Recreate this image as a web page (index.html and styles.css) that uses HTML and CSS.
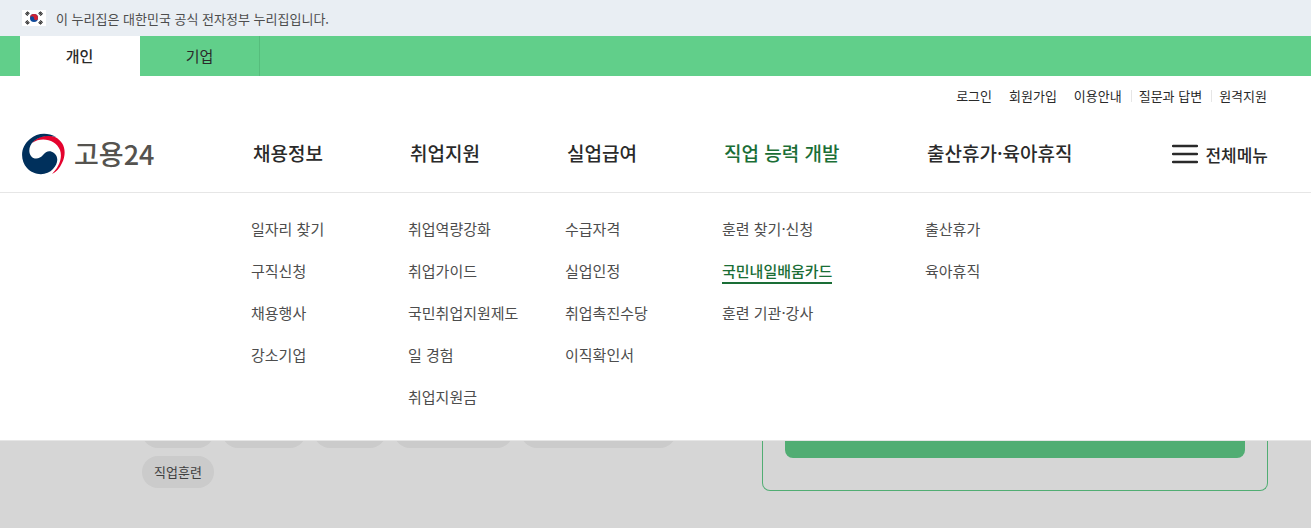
FILE: index.html
```html
<!DOCTYPE html>
<html lang="ko">
<head>
    <meta charset="utf-8">
    <meta name="viewport" content="width=device-width, initial-scale=1">
    <title>고용24</title>
    <link rel="stylesheet" href="styles.css">
</head>
<body>
    <div class="gov-banner">
        <svg class="flag" viewBox="0 0 24 16" width="24" height="16" aria-hidden="true">
            <rect width="24" height="16" fill="#fff"/>
            <circle cx="12" cy="8" r="4" fill="#0f4c9c"/>
            <path d="M8 8A4 4 0 0 1 16 8A2 2 0 0 1 12 8.500A2 2 0 0 0 8 8z" fill="#cf2233"/>
            <g stroke="#222" stroke-width="3.200" stroke-dasharray="1 0.300">
                <path d="M4.200 4.900L6.600 2.200"/>
                <path d="M17.400 2.200L19.800 4.900"/>
                <path d="M4.200 11.100L6.600 13.800"/>
                <path d="M17.400 13.800L19.800 11.100"/>
            </g>
        </svg>
        <span>이 누리집은 대한민국 공식 전자정부 누리집입니다.</span>
    </div>

    <nav class="site-tabs" aria-label="회원 구분">
        <a class="tab active" href="#">개인</a>
        <a class="tab" href="#">기업</a>
    </nav>

    <header class="header">
        <ul class="util">
            <li><a href="#">로그인</a></li>
            <li><a href="#">회원가입</a></li>
            <li><a href="#">이용안내</a></li>
            <li class="bar"><a href="#">질문과 답변</a></li>
            <li class="bar"><a href="#">원격지원</a></li>
        </ul>

        <div class="gnb">
            <a class="logo" href="#">
                <svg viewBox="0 0 44 42" width="44" height="42" aria-hidden="true">
                    <path d="M10 10C15 4 24 1 33 4C43 9 45 20 40 30C38 35 34 39 30 41C36 35 41 26 38 17C34 7 20 3 10 10z" fill="#e4032e"/>
                    <path d="M34 4C25 -1 15 0 8 6C-2 14 -2 27 5 35C12 43 25 43 31 36C36 31 37 24 32 20C28 17 24 18 21 22C18 26 12 27 9 23C6 19 7 12 12 8C18 3 26 2 34 4z" fill="#00305c"/>
                </svg>
                <span>고용24</span>
            </a>
            <ul class="menu">
                <li><a href="#">채용정보</a></li>
                <li><a href="#">취업지원</a></li>
                <li><a href="#">실업급여</a></li>
                <li><a class="active" href="#">직업 능력 개발</a></li>
                <li><a href="#">출산휴가·육아휴직</a></li>
            </ul>
            <button class="all-menu" type="button">
                <svg viewBox="0 0 26 20" width="26" height="20" aria-hidden="true">
                    <path d="M1 2H25M1 10H25M1 18H25" stroke="#2a2a2a" stroke-width="2.400" stroke-linecap="round"/>
                </svg>
                전체메뉴
            </button>
        </div>

        <div class="submenu">
            <ul>
                <li><a href="#">일자리 찾기</a></li>
                <li><a href="#">구직신청</a></li>
                <li><a href="#">채용행사</a></li>
                <li><a href="#">강소기업</a></li>
            </ul>
            <ul>
                <li><a href="#">취업역량강화</a></li>
                <li><a href="#">취업가이드</a></li>
                <li><a href="#">국민취업지원제도</a></li>
                <li><a href="#">일 경험</a></li>
                <li><a href="#">취업지원금</a></li>
            </ul>
            <ul>
                <li><a href="#">수급자격</a></li>
                <li><a href="#">실업인정</a></li>
                <li><a href="#">취업촉진수당</a></li>
                <li><a href="#">이직확인서</a></li>
            </ul>
            <ul>
                <li><a href="#">훈련 찾기·신청</a></li>
                <li><a class="active" href="#">국민내일배움카드</a></li>
                <li><a href="#">훈련 기관·강사</a></li>
            </ul>
            <ul>
                <li><a href="#">출산휴가</a></li>
                <li><a href="#">육아휴직</a></li>
            </ul>
        </div>
    </header>

    <main class="main">
        <div class="keywords">
            <a class="chip" href="#">채용정보</a>
            <a class="chip" href="#">청년일자리</a>
            <a class="chip" href="#">실업급여</a>
            <a class="chip" href="#">국민내일배움카드</a>
            <a class="chip" href="#">국민 취업지원 제도 안내</a>
            <a class="chip" href="#">직업훈련</a>
        </div>
        <div class="login-card">
            <button class="login-btn" type="button">로그인</button>
        </div>
    </main>
</body>
</html>
```

FILE: styles.css
```css
* {
    box-sizing: border-box;
}
body {
    margin: 0;
    min-height: 100vh;
    display: flex;
    flex-direction: column;
    font-family: "Noto Sans CJK KR", "Noto Sans", sans-serif;
    font-size: 15px;
    color: #2a2a2a;
    background-color: #fff;
}
ul {
    list-style: none;
    margin: 0;
    padding: 0;
}
a {
    color: inherit;
    text-decoration: none;
}
button {
    font-family: inherit;
    border: 0;
    padding: 0;
    cursor: pointer;
}

/* top banner */
.gov-banner {
    display: flex;
    align-items: center;
    gap: 10px;
    height: 36px;
    padding: 0 22px;
    background-color: #e9eef3;
    color: #4d4d4d;
    font-size: 13px;
}

/* personal / business tabs */
.site-tabs {
    display: flex;
    height: 40px;
    padding-left: 20px;
    background-color: #61cf8a;
}
.tab {
    width: 120px;
    line-height: 40px;
    text-align: center;
    border-right: 1px solid #56bd7c;
}
.tab.active {
    background-color: #fff;
    border-right-color: #fff;
    font-weight: 500;
}

/* header */
.header {
    position: relative;
    z-index: 2;
    background-color: #fff;
}
.util {
    display: flex;
    justify-content: flex-end;
    gap: 17px;
    height: 40px;
    padding-right: 44px;
    line-height: 40px;
    font-size: 13px;
}
.util .bar {
    display: flex;
    align-items: center;
    gap: 7px;
    margin-left: -8px;
}
.util .bar::before {
    content: "";
    width: 1px;
    height: 12px;
    background-color: #e6e6e6;
}
.gnb {
    display: flex;
    align-items: center;
    height: 77px;
    padding: 0 43px 0 22px;
    border-bottom: 1px solid #e6e6e6;
}
.logo {
    display: flex;
    align-items: center;
    gap: 8px;
    width: 231px;
    color: #55534f;
    font-size: 27px;
    font-weight: 500;
    line-height: 40px;
}
.menu,
.submenu {
    display: grid;
    grid-template-columns: 157px 157px 157px 203px auto;
}
.menu {
    padding-bottom: 3px;
    font-size: 19px;
    font-weight: 500;
}
.menu .active,
.submenu .active {
    color: #1a6e36;
}
.all-menu {
    display: flex;
    align-items: center;
    gap: 7px;
    margin-left: auto;
    background: none;
    color: #2a2a2a;
    font-size: 17px;
    font-weight: 500;
}
.submenu {
    position: absolute;
    top: 100%;
    left: 0;
    right: 0;
    padding: 15px 44px 22px 251px;
    background-color: #fff;
    border-bottom: 1px solid #e6e6e6;
    color: #4d4d4d;
}
.submenu li {
    height: 42px;
    padding-top: 8px;
}
.submenu a {
    display: inline-block;
    line-height: 26px;
}
.submenu .active {
    height: 26px;
    border-bottom: 2px solid #1a6e36;
    font-weight: 500;
}

/* page content under the open menu */
.main {
    position: relative;
    flex: 1;
    display: flex;
    justify-content: space-between;
    padding: 215px 43px 37px 142px;
}
.main::after {
    content: "";
    position: absolute;
    inset: 0;
    background-color: rgba(0, 0, 0, 0.16);
}
.keywords {
    display: flex;
    flex-wrap: wrap;
    align-content: flex-start;
    gap: 8px;
    width: 560px;
    padding-top: 8px;
}
.chip {
    height: 32px;
    padding: 0 12px;
    border-radius: 16px;
    background-color: #f2f2f2;
    color: #4d4d4d;
    font-size: 13px;
    line-height: 32px;
}
.login-card {
    width: 506px;
    padding: 0 22px 32px;
    border: 1px solid #61cf8a;
    border-top: 0;
    border-radius: 0 0 8px 8px;
}
.login-btn {
    width: 100%;
    height: 50px;
    border-radius: 8px;
    background-color: #61cf8a;
    color: #2a2a2a;
    font-size: 16px;
}
```
